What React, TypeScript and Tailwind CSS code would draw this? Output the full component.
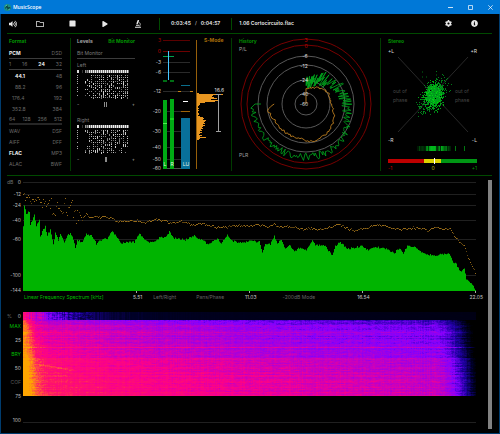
import { useEffect, useRef } from "react";
import { FaCog, FaInfoCircle, FaPlay, FaRegFolder, FaStop, FaVolumeUp } from "react-icons/fa";

type Point = [number, number];

// seeded so that every render draws the same noise
function makeRandom(seed: number) {
  let s = seed;
  return () => {
    s = (s * 1664525 + 1013904223) % 4294967296;
    return s / 4294967296;
  };
}

function lerp(points: Point[], x: number) {
  if (x <= points[0][0]) return points[0][1];
  for (let i = 1; i < points.length; i++) {
    const [x1, y1] = points[i];
    if (x <= x1) {
      const [x0, y0] = points[i - 1];
      return y0 + ((y1 - y0) * (x - x0)) / (x1 - x0);
    }
  }
  return points[points.length - 1][1];
}

function TitleBar() {
  return (
    <header className="flex h-[14px] items-center bg-[#0078d7] pl-1 text-white">
      <svg viewBox="0 0 14 14" className="mr-[2px] size-[7px]">
        <circle cx="7" cy="7" r="7" fill="#1c8f83" />
        <path d="M2 8h2l2-5 2 8 2-5 1 2h2" fill="none" stroke="#06363a" strokeWidth="1.6" />
        <path d="M3 4l3-2M9 12l2-2" stroke="#7fe0c0" strokeWidth="1.4" />
      </svg>
      <h1 className="font-['Open_Sans',sans-serif] text-[5px] font-semibold leading-[7px]">MusicScope</h1>
      <div className="ml-auto flex">
        <button aria-label="Minimize" className="flex h-[14px] w-5 items-center justify-center">
          <svg viewBox="0 0 5 5" className="size-[5px]"><path d="M0 2.5h5" stroke="#fff" strokeWidth="0.8" /></svg>
        </button>
        <button aria-label="Maximize" className="flex h-[14px] w-5 items-center justify-center">
          <svg viewBox="0 0 5 5" className="size-[5px]"><path d="M0.5 0.5h4v4h-4z" fill="none" stroke="#fff" strokeWidth="0.7" /></svg>
        </button>
        <button aria-label="Close" className="flex h-[14px] w-5 items-center justify-center">
          <svg viewBox="0 0 5 5" className="size-[5px]"><path d="M0.3 0.3l4.4 4.4M4.7 0.3L0.3 4.7" stroke="#fff" strokeWidth="0.7" /></svg>
        </button>
      </div>
    </header>
  );
}

function MicroscopeIcon() {
  return (
    <svg viewBox="0 0 12 16" className="h-2 w-[6px]" fill="none" stroke="currentColor">
      <path d="M7 0L4 8" strokeWidth="3" />
      <path d="M7 4c4 2 5 6 1 9" strokeWidth="1.5" />
      <path d="M2 10.5h6M0 14.5h12" strokeWidth="2" />
    </svg>
  );
}

function Toolbar() {
  const button = "flex h-[19px] items-center justify-center text-[#e8e8e8]";
  return (
    <nav className="ml-[6px] mr-[7px] flex h-5 items-center border-b border-[#004a00] text-[5px] font-bold leading-[7px] text-[#dcdcdc]">
      <button aria-label="Volume" className={`${button} w-3`}><FaVolumeUp size={8} /></button>
      <button aria-label="Open" className={`${button} ml-4 w-[10px]`}><FaRegFolder size={8} /></button>
      <button aria-label="Stop" className={`${button} ml-[21px] w-3`}><FaStop size={7} /></button>
      <button aria-label="Play" className={`${button} ml-[21px] w-3`}><FaPlay size={6} /></button>
      <button aria-label="Analyze" className={`${button} ml-[21px] w-3`}><MicroscopeIcon /></button>
      <div className="ml-[15px] flex h-3 items-center border-x border-[#004a00] px-[11px]">
        <span>0:03:45</span>
        <span className="mx-1 font-normal">/</span>
        <span>0:04:57</span>
      </div>
      <span className="ml-[7px]">1.06 Cortocircuito.flac</span>
      <button aria-label="Settings" className={`${button} ml-auto w-3`}><FaCog size={7} /></button>
      <button aria-label="Info" className={`${button} ml-[14px] mr-3 w-3`}><FaInfoCircle size={7} /></button>
    </nav>
  );
}

const formats = [
  { items: ["PCM", "DSD"], line: "border-b border-[#3c3c3c]" },
  { items: ["1", "16", "24", "32"], line: "border-b border-[#3c3c3c]" },
  { items: ["44.1", "48"], line: "pl-[6px]" },
  { items: ["88.2", "96"], line: "pl-[6px]" },
  { items: ["176.4", "192"], line: "pl-[3px]" },
  { items: ["352.8", "384"], line: "pl-[3px]" },
  { items: ["64", "128", "256", "512"], line: "border-b-2 border-[#262626]" },
  { items: ["WAV", "DSF"], line: "" },
  { items: ["AIFF", "DFF"], line: "" },
  { items: ["FLAC", "MP3"], line: "" },
  { items: ["ALAC", "BWF"], line: "" },
];
const active = ["PCM", "24", "44.1", "FLAC"];

function FormatPanel() {
  return (
    <div className="border-r border-[#003c00] pl-[2px] pr-2">
      <h2 className="h-[10px] font-bold text-[#009600]">Format</h2>
      {formats.map(({ items, line }) => (
        <div key={items[0]} className={`flex h-[11px] items-center justify-between text-[#6a6a6a] ${line}`}>
          {items.map((item) => (
            <span key={item} className={active.includes(item) ? "font-bold text-[#f0f0f0]" : ""}>{item}</span>
          ))}
        </div>
      ))}
    </div>
  );
}

function BitGrid({ seed }: { seed: number }) {
  const rnd = makeRandom(seed);
  const cells = [<rect key="t0" x="0" y="0" width="2" height="3" fill="#ddd" />, <rect key="t1" x="5" y="0" width="1" height="3" fill="#333" />];
  for (let c = 0; c < 22; c++) {
    const x = 8 + c * 2;
    cells.push(<rect key={`t${x}`} x={x} y="0" width="1.5" height="3" fill={c < 2 ? "#999" : "#eee"} />);
  }
  for (let r = 0; r < 12; r++) {
    if (rnd() < 0.7) cells.push(<rect key={`s${r}`} x="0" y={5 + r * 2} width="1" height="1" fill="#aaa" />);
    for (let c = 0; c < 22; c++) {
      const v = rnd();
      if (v < 0.32 || (c < 2 && v < 0.7)) continue;
      const shade = Math.round(100 + rnd() * 115);
      cells.push(<rect key={`${r}-${c}`} x={8 + c * 2} y={5 + r * 2} width="1" height={rnd() > 0.7 ? 2 : 1} fill={`rgb(${shade},${shade},${shade})`} />);
    }
  }
  return <svg viewBox="0 0 58 29" className="block h-[29px] w-full">{cells}</svg>;
}

function Channel({ name, seed, mark }: { name: string; seed: number; mark: string }) {
  return (
    <section>
      <h3 className="flex h-[11px] items-center">{name}</h3>
      <BitGrid seed={seed} />
      <div className="flex h-[10px] items-center justify-between text-[#aaa]">
        <span>-</span>
        <span className={mark} />
        <span>+</span>
      </div>
    </section>
  );
}

function LevelsPanel() {
  return (
    <div className="pl-[6px] pr-[10px] text-[#7c7c7c]">
      <div className="flex h-[10px] items-start justify-between">
        <button className="font-bold text-[#a0a0a0]">Levels</button>
        <button className="font-bold text-[#009600]">Bit Monitor</button>
      </div>
      <h2 className="flex h-[11px] items-center border-b border-[#3c3c3c]">Bit Monitor</h2>
      <Channel name="Left" seed={11} mark="h-[5px] w-[3px] border-x border-[#8c8c8c]" />
      <div className="h-[5px]" />
      <Channel name="Right" seed={29} mark="h-[5px] w-[2px] bg-[#8c8c8c]" />
    </div>
  );
}

const meterScale: [string, number, string, string][] = [
  ["3", 2, "#5a0000", "#a00000"],
  ["0", 13, "#6e0000", "#c80000"],
  ["-3", 24, "#2a2a2a", "#c8c8c8"],
  ["-6", 34, "#2a2a2a", "#c8c8c8"],
  ["-12", 53, "#2a2a2a", "#c8c8c8"],
  ["-20", 73, "#2a2a2a", "#c8c8c8"],
  ["-30", 93, "#2a2a2a", "#c8c8c8"],
  ["-40", 109, "#2a2a2a", "#c8c8c8"],
  ["-50", 121, "#2a2a2a", "#c8c8c8"],
  ["-60", 130, "#505050", "#c8c8c8"],
];

// width of the loudness distribution per pixel row, from row 55 on
const loudness = [2, 26, 16, 15, 17, 20, 14, 21, 18, 8, 3, 3, 2, 1, 1, 2, 1, 2, 1, 1, 2, 2, 1, 3, 6, 7, 6, 9, 8, 7, 8, 6, 8, 6, 5, 6, 4, 5, 3, 5, 3, 2, 5, 3, 9, 3, 2];

function MeterPanel() {
  return (
    <div className="border-r border-[#003c00]">
      <svg viewBox="0 0 86 133" className="block h-[133px] w-full">
        {meterScale.map(([label, y, line, color]) => (
          <g key={label}>
            <rect x="18" y={y} width="27" height="1" fill={line} />
            <text x="16" y={y + 2} textAnchor="end" fontSize="5" fill={color}>{label}</text>
          </g>
        ))}
        <rect x="18" y="62" width="4" height="69" fill="#00aa14" />
        <rect x="25" y="61" width="4" height="70" fill="#00aa14" />
        <rect x="18" y="85" width="4" height="1" fill="#50f050" />
        <rect x="25" y="80" width="4" height="2" fill="#14d21e" />
        <rect x="36" y="80" width="9" height="51" fill="#08709b" />
        <rect x="18" y="18" width="11" height="1" fill="#00a050" />
        <rect x="18" y="42" width="4" height="2" fill="#006e14" />
        <rect x="25" y="42" width="4" height="2" fill="#006e14" />
        <rect x="23" y="13" width="1" height="29" fill="#46c8ff" />
        <rect x="36" y="47" width="9" height="1" fill="#0a6e8c" />
        <rect x="33" y="53" width="3" height="1" fill="#c88214" />
        <rect x="45" y="53" width="3" height="1" fill="#c88214" />
        <rect x="38" y="63" width="5" height="1" fill="#fff" />
        <rect x="36" y="73" width="9" height="1" fill="#a0640a" />
        <g fontSize="5" fill="#e6f0e6" textAnchor="middle">
          <text x="20" y="128">L</text>
          <text x="27" y="128">R</text>
          <text x="41" y="128">LU</text>
        </g>
        <rect x="51" y="2" width="1" height="129" fill="#965f0a" />
        <text x="59" y="4" fontSize="5" fontWeight="bold" fill="#aa6e0a">S-Mode</text>
        {loudness.map((w, i) => (
          <rect key={i} x="52" y={55 + i} width={w} height="1" fill="#e89620" />
        ))}
        <text x="79" y="54" textAnchor="end" fontSize="5" fill="#dcdcdc">16.6</text>
        <path d="M71 56.5h5M73.5 56v37M71 93.5h5" stroke="#a0a0a0" fill="none" />
      </svg>
    </div>
  );
}

function polar(angle: number, r: number) {
  const a = (angle * Math.PI) / 180;
  return `${(74 + r * Math.sin(a)).toFixed(1)} ${(66 - r * Math.cos(a)).toFixed(1)}`;
}

const greenTrack: Point[] = [[0, 22], [25, 24], [30, 30], [55, 35], [75, 38], [90, 40], [105, 43], [115, 47], [125, 48], [140, 52], [180, 53], [225, 53], [267, 53]];
const greenSpread: Point[] = [[0, 7], [25, 8], [35, 10], [50, 9], [70, 6], [100, 6], [115, 7], [130, 3], [170, 4], [230, 3], [267, 3]];
const amberTrack: Point[] = [[0, 15], [20, 17], [40, 21], [65, 25], [90, 25], [108, 29], [125, 33], [147, 36], [170, 38], [190, 35], [223, 35], [240, 35], [260, 38], [265, 36], [270, 32]];

function HistoryPanel() {
  const rnd = makeRandom(5);
  const green: string[] = [];
  for (let a = 0; a <= 267; a += a < 40 ? 0.8 : 1.3) {
    green.push(polar(a, lerp(greenTrack, a) + (rnd() - 0.5) * 2 * lerp(greenSpread, a)));
  }
  const amber: string[] = [];
  for (let a = 0; a <= 270; a += 2.5) amber.push(polar(a, lerp(amberTrack, a) + (rnd() - 0.5) * 2));
  return (
    <div className="border-r border-[#003c00]">
      <svg viewBox="0 0 148 133" className="block h-[133px] w-full">
        <g fill="none">
          <circle cx="74" cy="66" r="65" stroke="#780000" />
          <circle cx="74" cy="66" r="59" stroke="#780000" />
          {[48, 39, 24, 11].map((r) => <circle key={r} cx="74" cy="66" r={r} stroke="#585858" />)}
          <path d={`M${green.join("L")}L${polar(270, 51)}L${polar(270, 45)}`} stroke="#00aa1e" strokeWidth="0.8" />
          <path d={`M74 66L${amber.join("L")}`} stroke="#c08020" strokeWidth="0.9" />
        </g>
        <g fontSize="5" textAnchor="middle" fill="#dcdcdc">
          <text x="74" y="4" fill="#c80000">3</text>
          <text x="74" y="10" fill="#c80000">0</text>
          <text x="73" y="20">-6</text>
          <text x="72" y="30">-12</text>
          <text x="72" y="44">-24</text>
          <text x="72" y="58">-40</text>
          <text x="72" y="68">-60</text>
        </g>
        <g fontSize="5" fill="#a0a0a0">
          <text x="7" y="5" fontWeight="bold" fill="#008c00">History</text>
          <text x="7" y="13">P/L</text>
          <text x="7" y="119">PLR</text>
        </g>
      </svg>
    </div>
  );
}

function StereoPanel() {
  const rnd = makeRandom(42);
  const dots = Array.from({ length: 1200 }, (_, i) => {
    const core = i < 700;
    const along = (rnd() + rnd() + rnd() + rnd() - 2) * (core ? 8 : 14);
    const across = (rnd() + rnd() + rnd() + rnd() - 2) * (core ? 8 : 8);
    return (
      <rect key={i} x={Math.round(52 + along * 0.6 + across * 0.7)} y={Math.round(57 - along * 0.9 + across * 0.7)} width="1" height="1" fill={core ? "#00d214" : "#009b1e"} fillOpacity="0.8" />
    );
  });
  const strip = Array.from({ length: 34 }, (_, i) => {
    const edge = Math.abs(i - 17) / 17;
    return <rect key={i} x={36 + i} y="108" width="1" height="5" fill="#00c81e" fillOpacity={Math.min(1, 1.3 - edge) * (0.2 + rnd() * 0.8)} />;
  });
  return (
    <div>
      <svg viewBox="0 0 111 133" className="block h-[133px] w-full">
        <path d="M17 19L87 94M87 19L17 94" stroke="#323232" strokeWidth="0.8" />
        <g fontSize="5" fill="#464646">
          <text x="12" y="55">out of</text>
          <text x="12" y="64">phase</text>
          <text x="74" y="55">out of</text>
          <text x="74" y="64">phase</text>
        </g>
        <g fontSize="5" fill="#dcdcdc">
          <text x="7" y="5" fontWeight="bold" fill="#008c00">Stereo</text>
          <text x="7" y="15">+L</text>
          <text x="96" y="15" textAnchor="end">+R</text>
          <text x="7" y="104">-R</text>
          <text x="96" y="104" textAnchor="end">-L</text>
        </g>
        {dots}
        <path d="M41 34h1M41 39h1M45 39h1M55 37h1" stroke="#006e14" />
        {strip}
        <path d="M74.5 108v5M83.5 108v5" stroke="#00780f" />
        <rect x="7" y="121" width="36" height="4" fill="#be0000" />
        <rect x="43" y="121" width="17" height="4" fill="#dcd200" />
        <rect x="60" y="121" width="36" height="4" fill="#009614" />
        <rect x="53" y="120" width="1" height="6" fill="#fff" />
        <g fontSize="5">
          <text x="7" y="132" fill="#c80000">-1</text>
          <text x="52" y="132" textAnchor="middle" fill="#bebe00">0</text>
          <text x="96" y="132" textAnchor="end" fill="#009600">+1</text>
        </g>
      </svg>
    </div>
  );
}

const spectrumLow: Point[] = [
  [0, 45], [1, 25], [3, 32], [6, 29], [7, 44], [11, 33], [13, 45], [16, 37], [17, 54], [22, 44], [24, 54], [27, 47], [30, 63], [32, 49], [35, 60], [37, 52], [41, 60], [44, 54], [48, 52], [52, 66], [54, 59], [59, 59], [63, 52], [69, 54], [73, 62], [77, 58], [84, 57], [89, 49], [94, 56], [98, 61], [111, 60], [116, 51], [121, 57], [126, 61], [132, 59], [137, 55], [143, 55], [146, 49], [150, 56], [162, 58], [171, 54], [179, 58], [184, 62], [194, 57], [198, 61], [204, 53], [209, 59], [217, 61], [227, 59], [236, 60], [239, 70], [242, 62], [247, 62], [251, 54], [254, 61], [258, 58], [262, 67], [267, 63], [271, 70], [277, 65], [283, 69], [289, 58], [292, 63], [301, 63], [309, 74], [312, 64], [317, 60], [324, 67], [334, 65], [339, 64], [344, 68], [351, 65], [361, 66], [371, 71], [376, 66], [380, 72], [384, 64], [394, 66], [399, 71], [411, 74], [417, 72], [426, 72], [429, 79], [433, 82], [437, 90], [441, 87], [443, 97], [447, 100], [453, 109],
];
const spectrumPeak: Point[] = [
  [0, 10], [3, 13], [7, 19], [11, 16], [16, 17], [21, 22], [27, 23], [34, 27], [41, 26], [49, 26], [54, 33], [59, 36], [63, 31], [67, 35], [77, 35], [84, 35], [94, 38], [104, 40], [114, 38], [121, 40], [131, 37], [141, 39], [147, 41], [157, 39], [167, 42], [177, 42], [187, 44], [197, 44], [207, 44], [217, 43], [227, 44], [236, 44], [251, 43], [267, 45], [277, 47], [294, 47], [304, 45], [314, 43], [327, 47], [341, 46], [351, 44], [364, 45], [377, 47], [394, 45], [404, 48], [411, 46], [427, 47], [431, 55], [441, 64], [446, 77], [449, 84], [453, 94],
];

function SpectrumPlot() {
  const rnd = makeRandom(7);
  let area = "M0 109";
  const peaks = [];
  let wobble = 0;
  for (let x = 0; x < 453; x++) {
    const fine = x < 60 ? 3 : 2;
    const y = Math.min(108, lerp(spectrumLow, x) + (rnd() - 0.5) * fine).toFixed(1);
    area += `L${x} ${y}L${x + 1} ${y}`;
    wobble = wobble * 0.7 + (rnd() - 0.5) * 2;
    const spread = x < 20 ? 8 : x < 58 ? 17 : 1;
    const py = Math.round(lerp(spectrumPeak, x) + wobble + (rnd() - 0.5) * spread);
    peaks.push(<rect key={x} x={x} y={py} width="1" height="1" fill={rnd() > 0.4 ? "#966a18" : "#60440e"} />);
  }
  return (
    <svg viewBox="0 0 453 111" preserveAspectRatio="none" className="block h-[111px] w-full">
      {[0, 12, 23, 38, 57, 93].map((y) => <rect key={y} x="0" y={y} width="453" height="1" fill="#202020" />)}
      <path d={`${area}L453 109Z`} fill="#00b400" />
      {peaks}
      <path d="M113.5 109v2M226.5 109v2M339.5 109v2M452.5 109v2" stroke="#aaa" />
    </svg>
  );
}

const spectrumScale: [string, number][] = [["0", 2], ["-12", 14], ["-24", 25], ["-40", 40], ["-60", 59], ["-100", 95], ["-144", 110]];

function Spectrum() {
  return (
    <section className="flex pt-[2px]">
      <svg viewBox="0 0 16 112" className="h-28 w-4 shrink-0 overflow-visible" fill="#bebebe">
        <text x="0" y="2" fontSize="5" fill="#707070">dB</text>
        {spectrumScale.map(([label, y]) => <text key={label} x="14" y={y} textAnchor="end" fontSize="5">{label}</text>)}
      </svg>
      <div className="min-w-0 flex-1">
        <SpectrumPlot />
        <div className="grid h-[7px] grid-cols-4 items-center text-[#c8c8c8]">
          <div className="flex justify-between pl-px">
            <span className="text-[#00be00]">Linear Frequency Spectrum [kHz]</span>
            <span className="-mr-[6px]">5.51</span>
          </div>
          <div className="flex text-[#666]">
            <button className="ml-[17px]">Left/Right</button>
            <button className="ml-5">Pans/Phase</button>
            <span className="-mr-[7px] ml-auto text-[#c8c8c8]">11.03</span>
          </div>
          <div className="flex justify-between">
            <button className="ml-[33px] text-[#666]">-200dB Mode</button>
            <span className="-mr-[7px]">16.54</span>
          </div>
          <span className="-mr-[7px] text-right">22.05</span>
        </div>
      </div>
    </section>
  );
}

const palette: [number, number, number, number][] = [
  [0, 0, 0, 0], [0.12, 0, 0, 40], [0.28, 30, 0, 160], [0.42, 130, 0, 255], [0.55, 195, 0, 195],
  [0.66, 250, 0, 140], [0.76, 255, 20, 105], [0.88, 255, 100, 50], [1, 255, 165, 0],
];

function heat(t: number) {
  for (let i = 1; i < palette.length; i++) {
    if (t <= palette[i][0]) {
      const a = palette[i - 1];
      const b = palette[i];
      const k = Math.max(0, (t - a[0]) / (b[0] - a[0]));
      return [1, 2, 3].map((c) => a[c] + (b[c] - a[c]) * k);
    }
  }
  return palette[palette.length - 1].slice(1);
}

function Spectrogram() {
  const ref = useRef<HTMLCanvasElement>(null);

  useEffect(() => {
    const ctx = ref.current?.getContext("2d");
    if (!ctx) return;
    const w = 453;
    const h = 84;
    const rnd = makeRandom(99);
    const columns = Array.from({ length: w }, () => (rnd() - 0.5) * 0.05);
    const image = ctx.createImageData(w, h);
    for (let y = 0; y < h; y++) {
      const v = (y - 8) / 76;
      const row = (rnd() - 0.5) * 0.06 + (y === 35 ? 0.12 : 0) + (y === 20 || y === 25 ? 0.05 : 0);
      const reach = 7 + 5 * Math.min(1, y / 45);
      let streak = 0;
      for (let x = 0; x < w; x++) {
        const u = x / w;
        streak = streak * 0.6 + (rnd() - 0.5) * 0.06;
        let t;
        if (y < 8) {
          t = 0.1 - 0.04 * u + 0.66 * Math.exp(-x / 36) + columns[x] * 4 * Math.exp(-x / 60) + streak * (x < 70 ? 1.5 : 0.1);
        } else {
          t = 0.54 + 0.16 * v + (y > 45 ? 0.04 : 0) - 0.18 * u + row + columns[x] * 0.7 + streak * 0.9;
          t += 0.08 * Math.exp(-x / 70) + 0.3 * Math.exp(-Math.pow(x / reach, 2)) + (x < 20 ? (rnd() - 0.5) * 0.08 : 0);
          if (y < 13) t -= 0.06;
          if (x > 15 && x < 52 && Math.abs(y - 52 - (x - 15) / 6) < 1) t += 0.08;
          if (x > 408) t -= 0.5 * Math.pow((x - 408) / 45, 2.2);
        }
        const [r, g, b] = heat(t);
        const i = (y * w + x) * 4;
        image.data[i] = r;
        image.data[i + 1] = g;
        image.data[i + 2] = b;
        image.data[i + 3] = 255;
      }
    }
    ctx.putImageData(image, 0, 0);
  }, []);

  const row = "flex h-[14px] w-full items-center justify-end";
  return (
    <section className="mt-3 flex">
      <div className="w-4 shrink-0 pr-[2px] text-[#bebebe]">
        <div className="flex h-[7px] items-center justify-between"><span className="text-[#707070]">%</span><span>0</span></div>
        <button className={`${row} text-[#00be00]`}>MAX</button>
        <div className={row}>25</div>
        <button className={`${row} text-[#00be00]`}>BRY</button>
        <div className={row}>50</div>
        <button className={`${row} text-[#5a5a5a]`}>COF</button>
        <div className={row}>75</div>
        <div className={`${row} mt-[10px]`}>100</div>
      </div>
      <div className="min-w-0 flex-1">
        <canvas ref={ref} width={453} height={84} className="block h-[84px] w-full" />
        <div className="mt-[26px] h-px bg-[#202020]" />
      </div>
    </section>
  );
}

export default function App() {
  return (
    <div className="flex min-h-screen flex-col bg-black font-[Inter,'Liberation_Sans',sans-serif] text-[5px] leading-[6px]">
      <TitleBar />
      <div className="flex flex-1 flex-col border-x border-b border-[#003c6e]">
        <Toolbar />
        <main className="ml-[6px] mr-[7px]">
          <div className="grid grid-cols-[64fr_74fr_87fr_149fr_111fr] border-b border-[#004a00] py-1">
            <FormatPanel />
            <LevelsPanel />
            <MeterPanel />
            <HistoryPanel />
            <StereoPanel />
          </div>
          <div className="flex gap-3 pb-1 pt-1">
            <div className="min-w-0 flex-1 pb-[2px]">
              <Spectrum />
              <Spectrogram />
            </div>
            <div className="w-1 bg-[#828282]" />
          </div>
        </main>
      </div>
    </div>
  );
}
